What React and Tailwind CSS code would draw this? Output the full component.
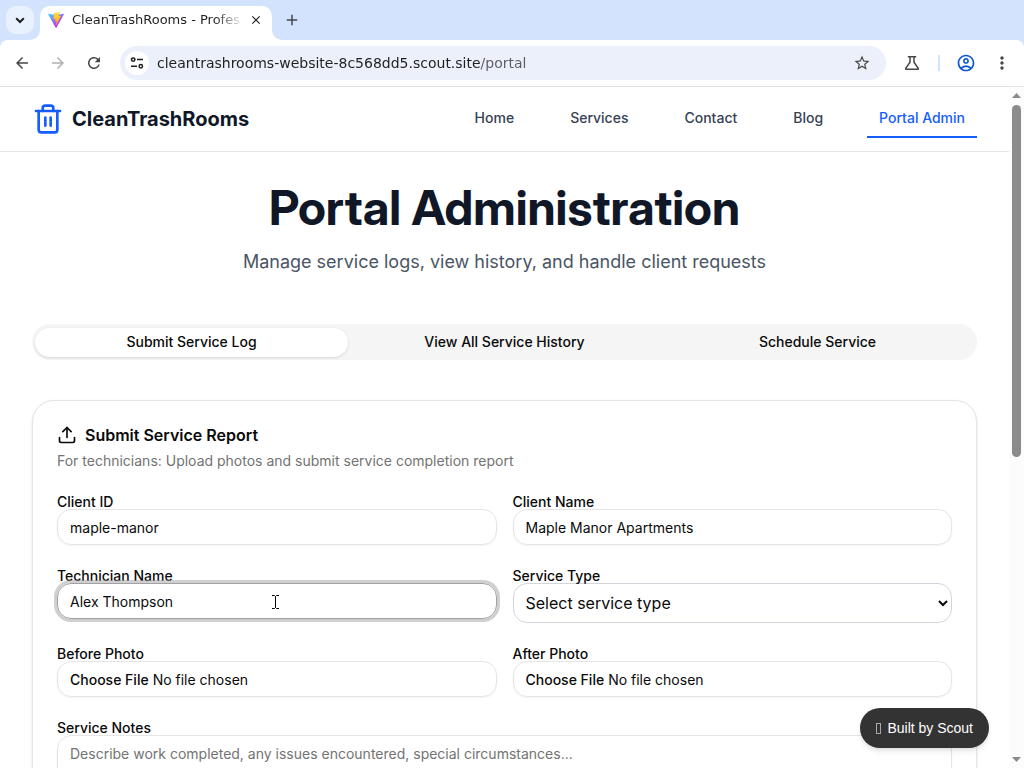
import { Trash2, Upload } from "lucide-react";
import {
  MdAdd,
  MdArrowBack,
  MdArrowForward,
  MdClose,
  MdMoreVert,
  MdOutlineAccountCircle,
  MdRefresh,
  MdStarBorder,
} from "react-icons/md";

const inputClass =
  "block h-9 w-full min-w-0 rounded-[14px] border border-[#e5e5e5] bg-transparent px-3 py-1 text-sm text-[#0a0a0a] shadow-xs outline-none placeholder:text-[#737373]";

const navLinks = ["Home", "Services", "Contact", "Blog"];

function ViteLogo() {
  return (
    <svg viewBox="0 0 256 257" className="size-4 shrink-0" aria-hidden="true">
      <defs>
        <linearGradient id="vite-body" x1="-.828%" x2="57.636%" y1="7.652%" y2="78.411%">
          <stop offset="0%" stopColor="#41D1FF" />
          <stop offset="100%" stopColor="#BD34FE" />
        </linearGradient>
        <linearGradient id="vite-bolt" x1="43.376%" x2="50.316%" y1="2.242%" y2="89.03%">
          <stop offset="0%" stopColor="#FFEA83" />
          <stop offset="8.333%" stopColor="#FFDD35" />
          <stop offset="100%" stopColor="#FFA800" />
        </linearGradient>
      </defs>
      <path
        fill="url(#vite-body)"
        d="M255.153 37.938L134.897 252.976c-2.483 4.44-8.862 4.466-11.382.048L.875 37.958c-2.746-4.814 1.371-10.646 6.827-9.67l120.385 21.517a6.537 6.537 0 0 0 2.322-.004l117.867-21.483c5.438-.991 9.574 4.796 6.877 9.62Z"
      />
      <path
        fill="url(#vite-bolt)"
        d="M185.432.063L96.44 17.501a3.268 3.268 0 0 0-2.634 3.014l-5.474 92.456a3.268 3.268 0 0 0 3.997 3.378l24.777-5.718c2.318-.535 4.413 1.507 3.936 3.838l-7.361 36.047c-.495 2.426 1.782 4.5 4.151 3.78l15.304-4.649c2.372-.72 4.652 1.36 4.15 3.788l-11.698 56.621c-.732 3.542 3.979 5.473 5.943 2.437l1.313-2.028l72.516-144.72c1.215-2.423-.88-5.186-3.54-4.672l-25.505 4.922c-2.396.462-4.435-1.77-3.759-4.114l16.646-57.705c.677-2.35-1.37-4.583-3.769-4.113Z"
      />
    </svg>
  );
}

function TabStrip() {
  return (
    <div className="flex h-10 items-end bg-[#d3e3fd] pl-1.5">
      <button
        type="button"
        aria-label="Search tabs"
        className="mb-1.5 flex size-7 items-center justify-center rounded-[10px] bg-[#e9f1fe] text-[#1f1f1f]"
      >
        <svg viewBox="0 0 10 10" className="size-2.5" fill="none" stroke="currentColor" strokeWidth="2">
          <path d="M1.2 3.2 5 7l3.8-3.8" />
        </svg>
      </button>
      <div className="relative ml-1.5 flex h-[34px] w-[232px] items-center rounded-t-[10px] bg-white pb-1.5 pl-2 pr-2">
        <svg viewBox="0 0 10 10" className="absolute -left-2.5 bottom-0 size-2.5" fill="#fff" aria-hidden="true">
          <path d="M10 0v10H0A10 10 0 0 0 10 0Z" />
        </svg>
        <svg viewBox="0 0 10 10" className="absolute -right-2.5 bottom-0 size-2.5" fill="#fff" aria-hidden="true">
          <path d="M0 0v10h10A10 10 0 0 1 0 0Z" />
        </svg>
        <ViteLogo />
        <span className="ml-2 min-w-0 flex-1 whitespace-nowrap bg-[linear-gradient(to_right,#1f1f1f_calc(100%-26px),#1f1f1f20)] bg-clip-text font-['DejaVu_Sans',sans-serif] text-[13px] leading-4 text-transparent">
          CleanTrashRooms - Profes
        </span>
        <button type="button" aria-label="Close tab" className="ml-2 flex size-4 items-center justify-center text-[#1f1f1f]">
          <MdClose size={14} />
        </button>
      </div>
      <button type="button" aria-label="New tab" className="mb-1.5 ml-1.5 flex size-7 items-center justify-center text-[#474747]">
        <MdAdd size={18} />
      </button>
    </div>
  );
}

function Toolbar() {
  return (
    <div className="bg-[#d3e3fd]">
      <div className="flex h-[47px] items-center rounded-t-lg border-b border-[#e1e3e1] bg-white pl-3 pr-3 text-[#474747]">
        <button type="button" aria-label="Back" className="flex size-5 items-center justify-center">
          <MdArrowBack size={18} />
        </button>
        <button type="button" aria-label="Forward" disabled className="ml-4 flex size-5 items-center justify-center text-[#b0b0b0]">
          <MdArrowForward size={18} />
        </button>
        <button type="button" aria-label="Reload" className="ml-4 flex size-5 items-center justify-center">
          <MdRefresh size={18} />
        </button>
        <div className="ml-4 flex h-[34px] flex-1 items-center rounded-full bg-[#ecf0fa] pl-[5px] pr-4">
          <button
            type="button"
            aria-label="Site information"
            className="flex size-6 shrink-0 items-center justify-center rounded-full bg-white text-[#1f1f1f]"
          >
            <svg viewBox="0 0 14 14" className="size-3.5" fill="none" stroke="currentColor" strokeWidth="1.5">
              <circle cx="3.2" cy="3.6" r="1.7" />
              <path d="M7 3.6h6M1 10.2h6" />
              <circle cx="10.8" cy="10.2" r="1.7" />
            </svg>
          </button>
          <input
            type="text"
            aria-label="Address"
            defaultValue="cleantrashrooms-website-8c568dd5.scout.site/portal"
            className="ml-2 h-6 min-w-0 flex-1 bg-[linear-gradient(to_right,#1f1f1f_323px,#5a5d62_323px)] bg-clip-text font-['DejaVu_Sans',sans-serif] text-sm text-transparent outline-none"
          />
          <button type="button" aria-label="Bookmark this page" className="flex size-4 items-center justify-center">
            <MdStarBorder size={18} className="shrink-0" />
          </button>
        </div>
        <button type="button" aria-label="Labs" className="ml-4 flex size-5 items-center justify-center">
          <svg viewBox="0 0 20 20" className="size-5" fill="none" stroke="currentColor" strokeWidth="1.5" strokeLinejoin="round">
            <path d="M5.8 3.8h8.4M8 3.8v5.4L3.7 15.4q-.4.9.7.9h11.2q1.1 0 .7-.9L12 9.2V3.8" />
          </svg>
        </button>
        <span className="ml-4 h-4 w-0.5 bg-[#d3e3fd]" />
        <button type="button" aria-label="Profile" className="ml-4 flex size-5 items-center justify-center text-[#0b57d0]">
          <MdOutlineAccountCircle size={20} />
        </button>
        <button type="button" aria-label="Browser menu" className="ml-4 flex size-5 items-center justify-center">
          <MdMoreVert size={20} />
        </button>
      </div>
    </div>
  );
}

function SiteHeader() {
  return (
    <header className="flex h-[65px] items-center justify-between border-b border-[#e5e7eb] bg-white px-8">
      <a href="#home" className="flex items-center gap-2 text-[#101828]">
        <Trash2 size={32} className="text-[#155dfc]" />
        <span className="text-xl font-bold">CleanTrashRooms</span>
      </a>
      <nav className="flex items-center gap-8 text-sm font-medium text-[#364153]">
        {navLinks.map((name) => (
          <a key={name} href={"#" + name.toLowerCase()} className="border-b-2 border-transparent px-3 py-2">
            {name}
          </a>
        ))}
        <a href="#portal" aria-current="page" className="border-b-2 border-[#155dfc] px-3 py-2 text-[#155dfc]">
          Portal Admin
        </a>
      </nav>
    </header>
  );
}

function Field({ id, label, children }) {
  return (
    <div>
      <label htmlFor={id} className="block text-sm font-medium leading-[14px]">
        {label}
      </label>
      {children}
    </div>
  );
}

function ServiceForm() {
  return (
    <form>
      <div className="grid grid-cols-2 gap-x-4 gap-y-6">
        <Field id="client-id" label="Client ID">
          <input id="client-id" type="text" defaultValue="maple-manor" className={inputClass} />
        </Field>
        <Field id="client-name" label="Client Name">
          <input id="client-name" type="text" defaultValue="Maple Manor Apartments" className={inputClass} />
        </Field>
        <Field id="technician" label="Technician Name">
          <div className="relative">
            <input
              id="technician"
              type="text"
              defaultValue="Alex Thompson"
              className="block h-9 w-full min-w-0 rounded-[14px] border border-[#a1a1a1] bg-transparent px-3 py-1 text-sm text-[#0a0a0a] shadow-xs outline-none ring-[3px] ring-[#a1a1a1]/50"
            />
            <svg viewBox="0 0 9 16" className="absolute left-1/2 top-[11px] -ml-1.5 h-4 w-[9px]" fill="none" stroke="#000" aria-hidden="true">
              <path d="M1 1.500h2.500l1 1 1-1H8M4.500 2.500v11M1 14.500h2.500l1-1 1 1H8" />
            </svg>
          </div>
        </Field>
        <Field id="service-type" label="Service Type">
          <select
            id="service-type"
            defaultValue=""
            className="block h-10 w-full rounded-[14px] border border-[#d1d5dc] bg-white px-2 text-base text-[#0a0a0a] outline-none"
          >
            <option value="">Select service type</option>
          </select>
        </Field>
        <Field id="before-photo" label="Before Photo">
          <input
            id="before-photo"
            type="file"
            className="block h-9 w-full min-w-0 rounded-[14px] border border-[#e5e5e5] bg-transparent px-3 py-1 text-sm text-[#0a0a0a] shadow-xs outline-none file:inline-flex file:h-7 file:border-0 file:bg-transparent file:text-sm file:font-medium file:text-[#0a0a0a]"
          />
        </Field>
        <Field id="after-photo" label="After Photo">
          <input
            id="after-photo"
            type="file"
            className="block h-9 w-full min-w-0 rounded-[14px] border border-[#e5e5e5] bg-transparent px-3 py-1 text-sm text-[#0a0a0a] shadow-xs outline-none file:inline-flex file:h-7 file:border-0 file:bg-transparent file:text-sm file:font-medium file:text-[#0a0a0a]"
          />
        </Field>
        <div className="col-span-2">
          <Field id="notes" label="Service Notes">
            <textarea
              id="notes"
              rows={4}
              placeholder="Describe work completed, any issues encountered, special circumstances..."
              className="block w-full resize-none rounded-[14px] border border-[#e5e5e5] bg-transparent px-3 py-2 text-sm shadow-xs outline-none placeholder:text-[#737373]"
            />
          </Field>
        </div>
      </div>
    </form>
  );
}

function PortalPage() {
  return (
    <main className="px-8 py-8">
      <div className="mb-12 text-center">
        <h1 className="mb-4 font-['Inter_Display','Inter',sans-serif] text-5xl font-bold text-[#101828]">Portal Administration</h1>
        <p className="text-lg leading-7 text-[#4a5565]">Manage service logs, view history, and handle client requests</p>
      </div>
      <div role="tablist" className="mb-10 grid h-9 grid-cols-3 items-center rounded-full bg-[#f5f5f5] p-[3px] text-sm font-medium">
        <button type="button" role="tab" aria-selected="true" className="h-[29px] rounded-full bg-white shadow-sm">
          Submit Service Log
        </button>
        <button type="button" role="tab" aria-selected="false" className="h-[29px] rounded-full">
          View All Service History
        </button>
        <button type="button" role="tab" aria-selected="false" className="h-[29px] rounded-full">
          Schedule Service
        </button>
      </div>
      <section className="rounded-[22px] border border-[#e5e5e5] bg-white p-6 shadow-sm">
        <h2 className="flex items-center gap-2 font-semibold leading-5">
          <Upload size={20} />
          Submit Service Report
        </h2>
        <p className="mb-6 mt-1.5 text-sm text-[#737373]">For technicians: Upload photos and submit service completion report</p>
        <ServiceForm />
      </section>
    </main>
  );
}

function Scrollbar() {
  return (
    <div className="flex w-[15px] shrink-0 flex-col items-center justify-between bg-[#fcfcfc] py-1.5" aria-hidden="true">
      <svg viewBox="0 0 9 5" className="h-[5px] w-[9px] shrink-0" fill="#8b8b8b">
        <path d="M4.500 0 9 5H0Z" />
      </svg>
      <div className="mt-[7px] w-full flex-1 px-[3px]">
        <div className="h-[54%] w-full rounded-full bg-[#8b8b8b]" />
      </div>
      <svg viewBox="0 0 9 5" className="h-[5px] w-[9px] shrink-0" fill="#8b8b8b">
        <path d="M0 0h9L4.500 5Z" />
      </svg>
    </div>
  );
}

export default function App() {
  return (
    <div className="flex h-screen flex-col overflow-hidden bg-white font-['Inter',sans-serif] text-[#0a0a0a]">
      <TabStrip />
      <Toolbar />
      <div className="flex min-h-0 flex-1">
        <div className="relative min-w-0 flex-1 overflow-hidden">
          <SiteHeader />
          <PortalPage />
          <a
            href="#scout"
            className="absolute bottom-5 right-5 flex h-10 items-center gap-1.5 rounded-full bg-[#333333] px-4 font-['Liberation_Sans',sans-serif] text-sm text-white shadow-md"
          >
            <span className="h-[11px] w-[5px] border border-[#a8a8a8]" aria-hidden="true" />
            Built by Scout
          </a>
        </div>
        <Scrollbar />
      </div>
    </div>
  );
}
